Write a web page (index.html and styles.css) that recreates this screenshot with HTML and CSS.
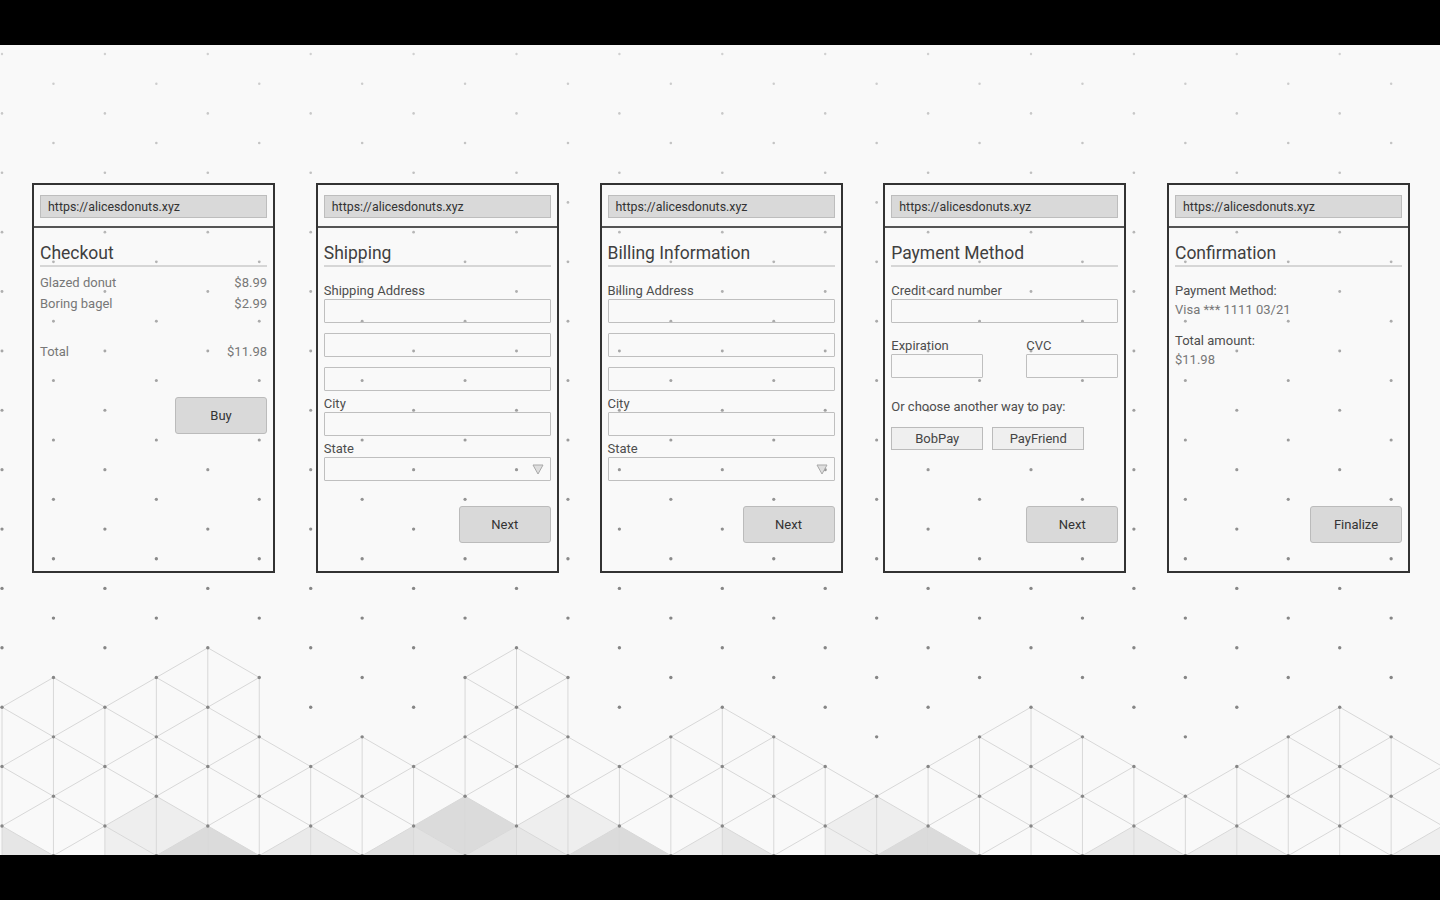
FILE: index.html
```html
<!DOCTYPE html>
<html lang="en">
<head>
    <meta charset="UTF-8">
    <title>Alice's Donuts – checkout flow</title>
    <link rel="stylesheet" href="styles.css">
</head>
<body>

<div class="stage">
    <svg class="backdrop" id="backdrop" viewBox="0 45 1440 810" xmlns="http://www.w3.org/2000/svg"></svg>

    <main class="flow">

        <!-- 1. Checkout -->
        <section class="phone">
            <div class="urlbar"><span>https://alicesdonuts.xyz</span></div>
            <div class="screen">
                <h2>Checkout</h2>
                <ul class="items">
                    <li><span>Glazed donut</span><span>$8.99</span></li>
                    <li><span>Boring bagel</span><span>$2.99</span></li>
                </ul>
                <div class="row total"><span>Total</span><span>$11.98</span></div>
                <div class="actions inline"><button class="btn">Buy</button></div>
            </div>
        </section>

        <!-- 2. Shipping -->
        <section class="phone">
            <div class="urlbar"><span>https://alicesdonuts.xyz</span></div>
            <div class="screen">
                <h2>Shipping</h2>
                <div class="form">
                    <label>Shipping Address</label>
                    <div class="input"></div>
                    <div class="input spaced"></div>
                    <div class="input spaced"></div>
                    <label class="after">City</label>
                    <div class="input"></div>
                    <label class="after">State</label>
                    <div class="input select">
                        <svg width="12" height="11" viewBox="0 0 12 11"><polygon points="1,1 11,1 6,10" fill="#dedede" stroke="#a9a9a9" stroke-width="1"/></svg>
                    </div>
                </div>
                <div class="actions"><button class="btn">Next</button></div>
            </div>
        </section>

        <!-- 3. Billing -->
        <section class="phone">
            <div class="urlbar"><span>https://alicesdonuts.xyz</span></div>
            <div class="screen">
                <h2>Billing Information</h2>
                <div class="form">
                    <label>Billing Address</label>
                    <div class="input"></div>
                    <div class="input spaced"></div>
                    <div class="input spaced"></div>
                    <label class="after">City</label>
                    <div class="input"></div>
                    <label class="after">State</label>
                    <div class="input select">
                        <svg width="12" height="11" viewBox="0 0 12 11"><polygon points="1,1 11,1 6,10" fill="#dedede" stroke="#a9a9a9" stroke-width="1"/></svg>
                    </div>
                </div>
                <div class="actions"><button class="btn">Next</button></div>
            </div>
        </section>

        <!-- 4. Payment -->
        <section class="phone">
            <div class="urlbar"><span>https://alicesdonuts.xyz</span></div>
            <div class="screen">
                <h2>Payment Method</h2>
                <div class="form">
                    <label>Credit card number</label>
                    <div class="input"></div>
                    <div class="pair">
                        <div>
                            <label>Expiration</label>
                            <div class="input"></div>
                        </div>
                        <div>
                            <label>CVC</label>
                            <div class="input"></div>
                        </div>
                    </div>
                    <p class="hint">Or choose another way to pay:</p>
                    <div class="alt-pay">
                        <button class="btn-alt">BobPay</button>
                        <button class="btn-alt">PayFriend</button>
                    </div>
                </div>
                <div class="actions"><button class="btn">Next</button></div>
            </div>
        </section>

        <!-- 5. Confirmation -->
        <section class="phone">
            <div class="urlbar"><span>https://alicesdonuts.xyz</span></div>
            <div class="screen">
                <h2>Confirmation</h2>
                <dl class="summary">
                    <dt>Payment Method:</dt>
                    <dd>Visa *** 1111 03/21</dd>
                    <dt>Total amount:</dt>
                    <dd>$11.98</dd>
                </dl>
                <div class="actions"><button class="btn">Finalize</button></div>
            </div>
        </section>

    </main>
</div>

<script src="script.js"></script>
</body>
</html>
```

FILE: styles.css
```css
/* Wireframe checkout flow */

:root {
    --bg: #f9f9f9;
    --frame: #333333;
    --text: #444444;
    --label: #4d4d4d;
    --muted: #777777;
    --field: #bfbfbf;
    --button: #d9d9d9;
}

* {
    box-sizing: border-box;
}

body {
    margin: 0;
    background: #000000;
    font-family: Roboto, "Liberation Sans", sans-serif;
    color: var(--text);
}

.stage {
    position: relative;
    margin-top: 45px;
    height: 810px;
    background: var(--bg);
    overflow: hidden;
}

.backdrop {
    position: absolute;
    left: 0;
    top: 0;
    width: 1440px;
    height: 810px;
}

.flow {
    position: relative;
    display: flex;
    gap: 40.75px;
    padding: 138px 0 0 32px;
}

/* phone frame */
.phone {
    width: 243px;
    height: 390px;
    border: 2px solid var(--frame);
    display: flex;
    flex-direction: column;
}

.urlbar {
    padding: 10px 6px 8px;
    border-bottom: 2px solid #555555;
}

.urlbar span {
    display: block;
    height: 23px;
    padding-left: 7px;
    background: var(--button);
    border: 1px solid #bdbdbd;
    font-size: 12.4px;
    line-height: 21px;
    color: #333333;
}

.screen {
    flex: 1;
    display: flex;
    flex-direction: column;
    padding: 13px 6px 28px;
}

.screen h2 {
    margin: 0;
    font-size: 17.5px;
    font-weight: 400;
    line-height: 24px;
    color: #3f3f3f;
    border-bottom: 2px solid #d6d6d6;
}

/* checkout */
.items {
    list-style: none;
    margin: 5px 0 0;
    padding: 0;
}

.items li, .row {
    display: flex;
    justify-content: space-between;
    font-size: 13px;
    line-height: 21px;
    color: var(--muted);
}

.total {
    margin-top: 27px;
}

.actions {
    display: flex;
    justify-content: flex-end;
    margin-top: auto;
}

.actions.inline {
    margin-top: 35px;
}

.btn {
    width: 92px;
    height: 37px;
    background: var(--button);
    border: 1px solid #bbbbbb;
    border-radius: 3px;
    font-family: inherit;
    font-size: 13px;
    color: #333333;
    padding: 0;
}

/* forms */
.form {
    margin-top: 16px;
}

.form label {
    display: block;
    font-size: 13px;
    line-height: 16px;
    color: var(--label);
}

.form label.after {
    margin-top: 5px;
}

.input {
    height: 24px;
    border: 1px solid var(--field);
    border-radius: 1px;
}

.input.spaced {
    margin-top: 10px;
}

.select {
    display: flex;
    justify-content: flex-end;
    align-items: center;
    padding-right: 6px;
}

.pair {
    display: flex;
    justify-content: space-between;
    margin-top: 15px;
}

.pair > div {
    width: 92px;
}

.hint {
    margin: 21px 0 0;
    font-size: 13px;
    line-height: 16px;
    color: var(--label);
}

.alt-pay {
    display: flex;
    gap: 9px;
    margin-top: 12px;
}

.btn-alt {
    width: 92px;
    height: 23px;
    padding: 0;
    background: #efefef;
    border: 1px solid #bbbbbb;
    font-family: inherit;
    font-size: 13px;
    color: #444444;
}

/* confirmation */
.summary {
    margin: 14px 0 0;
    font-size: 13px;
    line-height: 19px;
}

.summary dt {
    color: var(--label);
}

.summary dt + dd + dt {
    margin-top: 12px;
}

.summary dd {
    margin: 0;
    color: var(--muted);
}
```

FILE: script.js
```js
// Background: triangular dot grid with a mesh of triangles along the bottom
(function () {
    var svg = document.getElementById('backdrop');
    var NS = 'http://www.w3.org/2000/svg';

    var X0 = 2, DX = 51.45, Y0 = 54, DY = 29.69, BOTTOM = 856;

    // top row of the mesh for every column
    var tops = [22, 21, 22, 21, 20, 21, 24, 23, 24, 21, 20, 21, 24, 23,
                22, 23, 24, 25, 24, 23, 22, 23, 24, 25, 24, 23, 22, 23, 24];

    // shaded triangles: three vertices (column, row) and a fill
    var shades = [
        [0, 26, 1, 27, 0, 28, '#e6e6e6'],
        [2, 26, 3, 25, 3, 27, '#eeeeee'],
        [2, 26, 3, 27, 2, 28, '#efefef'],
        [3, 25, 4, 26, 3, 27, '#eeeeee'],
        [3, 27, 4, 26, 4, 28, '#dbdbdb'],
        [4, 26, 5, 27, 4, 28, '#dbdbdb'],
        [5, 27, 6, 26, 6, 28, '#eaeaea'],
        [6, 26, 7, 27, 6, 28, '#eaeaea'],
        [7, 27, 8, 26, 8, 28, '#e0e0e0'],
        [8, 26, 9, 25, 9, 27, '#dbdbdb'],
        [8, 26, 9, 27, 8, 28, '#e2e2e2'],
        [9, 25, 10, 26, 9, 27, '#dbdbdb'],
        [9, 27, 10, 26, 10, 28, '#e4e4e4'],
        [10, 26, 11, 25, 11, 27, '#eeeeee'],
        [10, 26, 11, 27, 10, 28, '#e6e6e6'],
        [11, 25, 12, 26, 11, 27, '#eeeeee'],
        [11, 27, 12, 26, 12, 28, '#dbdbdb'],
        [12, 26, 13, 27, 12, 28, '#dbdbdb'],
        [13, 27, 14, 26, 14, 28, '#eeeeee'],
        [14, 26, 15, 27, 14, 28, '#e6e6e6'],
        [16, 26, 17, 25, 17, 27, '#eeeeee'],
        [16, 26, 17, 27, 16, 28, '#efefef'],
        [17, 25, 18, 26, 17, 27, '#eeeeee'],
        [17, 27, 18, 26, 18, 28, '#dbdbdb'],
        [18, 26, 19, 27, 18, 28, '#dbdbdb'],
        [21, 27, 22, 26, 22, 28, '#eaeaea'],
        [22, 26, 23, 27, 22, 28, '#eaeaea'],
        [23, 27, 24, 26, 24, 28, '#eeeeee'],
        [24, 26, 25, 27, 24, 28, '#eeeeee'],
        [27, 27, 28, 26, 28, 28, '#eeeeee']
    ];

    function px(c) { return +(X0 + c * DX).toFixed(2); }
    function py(r) { return +(Y0 + r * DY).toFixed(2); }

    function add(tag, attrs) {
        var el = document.createElementNS(NS, tag);
        for (var k in attrs) {
            el.setAttribute(k, attrs[k]);
        }
        svg.appendChild(el);
        return el;
    }

    // shaded triangles
    shades.forEach(function (t) {
        var pts = px(t[0]) + ',' + py(t[1]) + ' ' + px(t[2]) + ',' + py(t[3]) + ' ' + px(t[4]) + ',' + py(t[5]);
        add('polygon', { points: pts, fill: t[6] });
    });

    // mesh lines
    var d = '';
    for (var c = 0; c < tops.length; c++) {
        d += 'M' + px(c) + ' ' + py(tops[c]) + 'V' + BOTTOM;
        if (c + 1 < tops.length) {
            for (var r = tops[c]; r <= 28; r += 2) {
                [r - 1, r + 1].forEach(function (rb) {
                    if (rb >= tops[c + 1]) {
                        d += 'M' + px(c) + ' ' + py(r) + 'L' + px(c + 1) + ' ' + py(rb);
                    }
                });
            }
        }
    }
    add('path', { d: d, stroke: '#d8d8d8', 'stroke-width': 1, fill: 'none' });

    // dots, darker towards the bottom
    for (var row = 0; row <= 27; row++) {
        var y = py(row);
        var k = Math.min(1, Math.max(0, (y - 54) / (590 - 54)));
        var g = Math.round(208 - 74 * k);
        for (var col = row % 2; col <= 28; col += 2) {
            add('circle', {
                cx: px(col),
                cy: y,
                r: 1.2 + 0.5 * k,
                fill: 'rgb(' + g + ',' + g + ',' + g + ')'
            });
        }
    }
})();
```
